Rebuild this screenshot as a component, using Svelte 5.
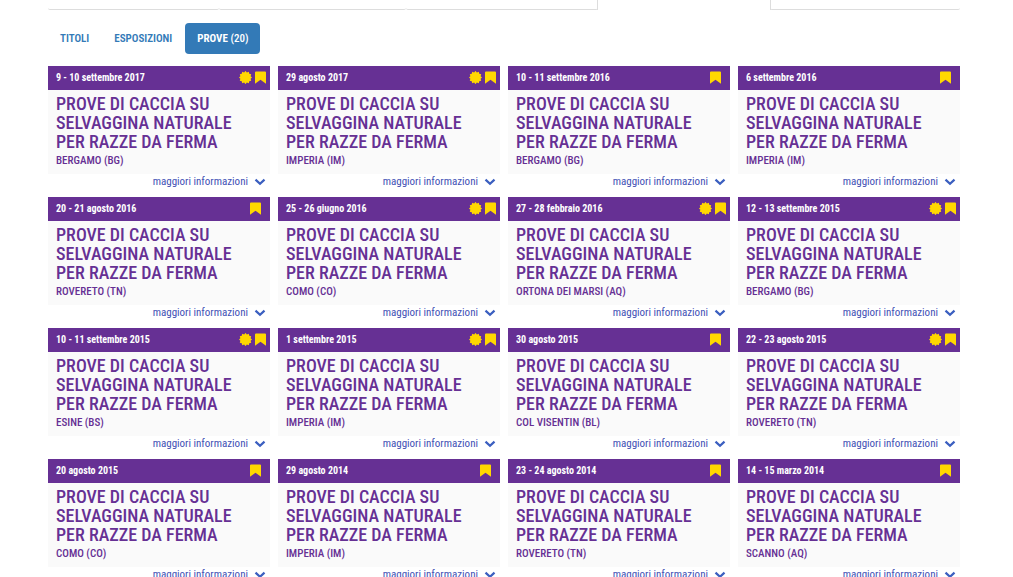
<script>
  const events = [
    ['9 - 10 settembre 2017', 'BERGAMO (BG)', true],
    ['29 agosto 2017', 'IMPERIA (IM)', true],
    ['10 - 11 settembre 2016', 'BERGAMO (BG)', false],
    ['6 settembre 2016', 'IMPERIA (IM)', false],
    ['20 - 21 agosto 2016', 'ROVERETO (TN)', false],
    ['25 - 26 giugno 2016', 'COMO (CO)', true],
    ['27 - 28 febbraio 2016', 'ORTONA DEI MARSI (AQ)', true],
    ['12 - 13 settembre 2015', 'BERGAMO (BG)', true],
    ['10 - 11 settembre 2015', 'ESINE (BS)', true],
    ['1 settembre 2015', 'IMPERIA (IM)', true],
    ['30 agosto 2015', 'COL VISENTIN (BL)', false],
    ['22 - 23 agosto 2015', 'ROVERETO (TN)', true],
    ['20 agosto 2015', 'COMO (CO)', false],
    ['29 agosto 2014', 'IMPERIA (IM)', false],
    ['23 - 24 agosto 2014', 'ROVERETO (TN)', false],
    ['14 - 15 marzo 2014', 'SCANNO (AQ)', false]
  ].map(([date, place, certificate]) => ({ date, place, certificate }));

  // Rosette outline: twelve teeth around the centre
  const seal = Array.from({ length: 24 }, (_, i) => {
    const r = i % 2 ? 5.3 : 6.6;
    const a = (i * Math.PI) / 12;
    return `${(6.5 + r * Math.cos(a)).toFixed(2)},${(6.5 + r * Math.sin(a)).toFixed(2)}`;
  }).join(' ');
</script>

<main>
  <div class="strip">
    <span></span><span></span><span></span><span class="current"></span><span></span>
  </div>

  <nav>
    <a href="#titoli">TITOLI</a>
    <a href="#esposizioni">ESPOSIZIONI</a>
    <a href="#prove" class="active" aria-current="page">PROVE <small>(20)</small></a>
  </nav>

  <div class="grid">
    {#each events as event}
      <article>
        <header class:single={!event.certificate}>
          <time>{event.date}</time>
          {#if event.certificate}
            <svg width="13" height="13" viewBox="0 0 13 13" aria-hidden="true"><polygon points={seal} /></svg>
          {/if}
          <svg width="11" height="13" viewBox="0 0 11 13" aria-hidden="true">
            <path d="M1 .5h9q1 0 1 1v11.300L5.500 8.800 0 12.800V1.500q0-1 1-1z" />
          </svg>
        </header>
        <div class="body">
          <h2>PROVE DI CACCIA SU SELVAGGINA NATURALE PER RAZZE DA FERMA</h2>
          <p>{event.place}</p>
        </div>
        <button type="button">
          maggiori informazioni
          <svg width="12" height="8" viewBox="0 0 12 8" aria-hidden="true">
            <path class="chevron" d="M1.500 1.600 6 5.800l4.500-4.200" />
          </svg>
        </button>
      </article>
    {/each}
  </div>
</main>

<style>
  :global(body) {
    background: #fff;
  }

  main {
    padding: 0 53px 0 48px;
    font-family: 'Roboto Condensed', Roboto, sans-serif;
  }

  .strip {
    display: grid;
    grid-template-columns: 171fr 187fr 192fr 172fr 190fr;
    height: 10px;
  }

  .strip span {
    border-bottom: 1px solid #ddd;
    border-radius: 0 0 2px 2px;
  }

  .strip .current {
    border-bottom: 0;
    box-shadow: -1px 0 #ddd, 1px 0 #ddd;
    border-radius: 0;
  }

  nav {
    display: flex;
    gap: 1px;
    padding: 13px 0 12px;
  }

  nav a {
    padding: 8px 12px;
    border-radius: 4px;
    color: #337ab7;
    font-size: 11px;
    font-weight: 600;
    line-height: 15px;
    text-decoration: none;
  }

  nav .active {
    background: #337ab7;
    color: #fff;
    font-weight: 700;
  }

  small {
    font-size: 11px;
    font-weight: 500;
  }

  .grid {
    display: grid;
    grid-template-columns: repeat(4, minmax(0, 1fr));
    column-gap: 8px;
  }

  article {
    display: flex;
    flex-direction: column;
  }

  header {
    display: flex;
    box-sizing: border-box;
    align-items: center;
    gap: 3px;
    height: 24px;
    padding: 0 4px 2px 8px;
    background: #663094;
    color: #fff;
    fill: #ffd800;
  }

  .single {
    padding-right: 9px;
  }

  time {
    flex: 1;
    font-size: 10px;
    font-weight: 700;
  }

  .body {
    flex: 1;
    padding: 4px 8px 4px;
    background: #fafafa;
    color: #663094;
  }

  h2 {
    max-width: 190px;
    margin: 0;
    font-size: 18px;
    font-weight: 500;
    line-height: 19px;
  }

  p {
    margin: 0;
    font-size: 11px;
    font-weight: 500;
    line-height: 19px;
  }

  button {
    display: flex;
    align-items: center;
    align-self: flex-end;
    gap: 6px;
    height: 23px;
    padding: 0 4px 8px;
    border: 0;
    background: none;
    color: #3f51b5;
    font: 400 11px/15px 'Roboto Condensed', Roboto, sans-serif;
    cursor: pointer;
  }

  .chevron {
    fill: none;
    stroke: #3b5fc0;
    stroke-width: 2.200;
  }
</style>
